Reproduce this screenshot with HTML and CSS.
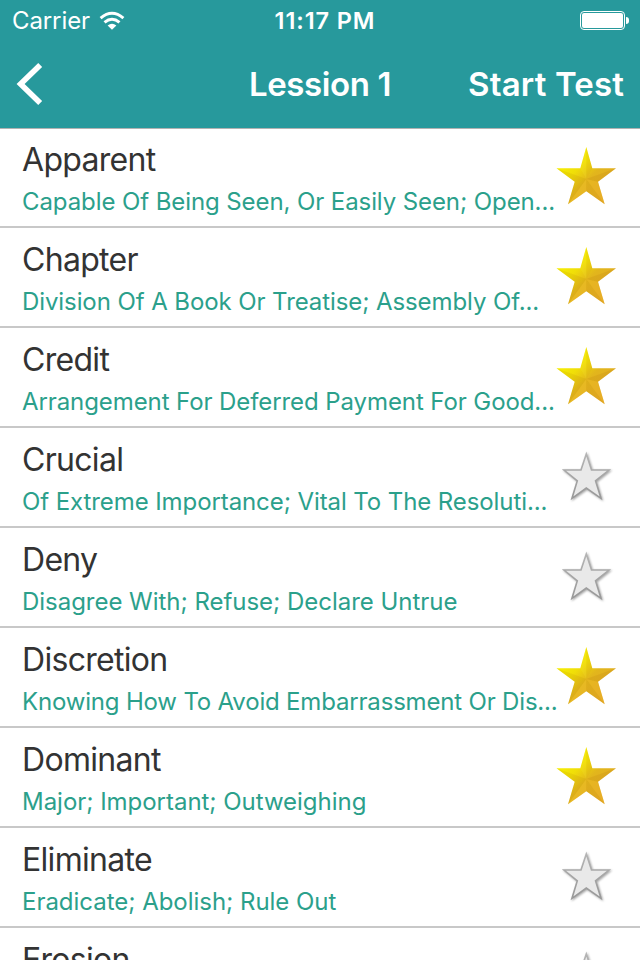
FILE: index.html
```html
<!DOCTYPE html>
<html lang="en">
<head>
    <meta charset="UTF-8">
    <meta name="viewport" content="width=device-width, initial-scale=1.0">
    <title>Lession 1</title>
    <link rel="stylesheet" href="styles.css">
</head>
<body>
    <svg class="symbols" aria-hidden="true">
        <defs>
            <linearGradient id="outline" x1="0" y1="0" x2="0" y2="1">
                <stop offset="0" stop-color="#b4b4b4"/>
                <stop offset="1" stop-color="#989898"/>
            </linearGradient>
            <linearGradient id="gold" x1="0.1" y1="0.15" x2="0.8" y2="0.85">
                <stop offset="0" stop-color="#faf600"/>
                <stop offset="0.35" stop-color="#f0de08"/>
                <stop offset="0.6" stop-color="#e2b61c"/>
                <stop offset="1" stop-color="#e3a926"/>
            </linearGradient>
        </defs>
        <symbol id="star-on" viewBox="0 0 60 60">
            <path fill="url(#gold)" d="M30.3.9 36.3 22.3 60 22.3 42 35.7 48.7 58.3 30.3 45.3 12 58.3 18.7 35.7.5 22.3 24.3 22.3Z"/>
            <path fill="#fff34a" opacity=".12" d="M30.3 33V.9L24.3 22.3Z"/>
            <path fill="#c99c10" opacity=".1" d="M30.3 33V.9L36.3 22.3Z"/>
            <path fill="#b88c00" opacity=".16" d="M30.3 33 .5 22.3 18.7 35.7Z"/>
            <path fill="#a87800" opacity=".1" d="M30.3 33 18.7 35.7 12 58.3Z"/>
            <path fill="#ffc93a" opacity=".2" d="M30.3 33 12 58.3 30.3 45.3Z"/>
            <path fill="#c98c10" opacity=".16" d="M30.3 33 30.3 45.3 48.7 58.3Z"/>
            <path fill="#f2b92c" opacity=".3" d="M30.3 33 42 35.7 48.7 58.3Z"/>
            <path fill="#c58a12" opacity=".25" d="M30.3 33 60 22.3 42 35.7Z"/>
        </symbol>
        <symbol id="star-off" viewBox="0 0 60 60">
            <path fill="#e9e9e9" stroke="url(#outline)" stroke-width="1.6" d="M30.3 8 35.5 24 53 24 39.5 34.8 45 52.3 30.3 42 16 52.3 21.3 34.8 8 24 25 24Z"/>
        </symbol>
    </svg>

    <div class="header">
        <div class="status-bar">
            <div class="signal">
                <span class="carrier">Carrier</span>
                <svg class="wifi" width="26" height="20" viewBox="0 0 26 20">
                    <path fill="none" stroke="#fff" stroke-width="3" d="M1.6 7.1Q13-2.6 24.4 7.1M5.5 11.4Q13 5.2 20.5 11.4"/>
                    <path fill="#fff" d="M8.6 14.4Q13 11 17.4 14.4L13 18.8Z"/>
                </svg>
            </div>
            <span class="time">11:17 PM</span>
            <div class="battery"><div class="level"></div></div>
        </div>
        <div class="nav-bar">
            <svg class="back" width="28" height="44" viewBox="0 0 28 44">
                <path fill="none" stroke="#fff" stroke-width="5.6" d="M24.2 3 4.6 22 24.2 41"/>
            </svg>
            <h1 class="title">Lession 1</h1>
            <span class="start">Start Test</span>
        </div>
    </div>

    <ul class="words">
        <li class="word">
            <div class="text"><h2>Apparent</h2><p>Capable Of Being Seen, Or Easily Seen; Open...</p></div>
            <svg class="star"><use href="#star-on"/></svg>
        </li>
        <li class="word">
            <div class="text"><h2>Chapter</h2><p>Division Of A Book Or Treatise; Assembly Of...</p></div>
            <svg class="star"><use href="#star-on"/></svg>
        </li>
        <li class="word">
            <div class="text"><h2>Credit</h2><p>Arrangement For Deferred Payment For Good...</p></div>
            <svg class="star"><use href="#star-on"/></svg>
        </li>
        <li class="word">
            <div class="text"><h2>Crucial</h2><p>Of Extreme Importance; Vital To The Resoluti...</p></div>
            <svg class="star off"><use href="#star-off"/></svg>
        </li>
        <li class="word">
            <div class="text"><h2>Deny</h2><p class="wide">Disagree With; Refuse; Declare Untrue</p></div>
            <svg class="star off"><use href="#star-off"/></svg>
        </li>
        <li class="word">
            <div class="text"><h2>Discretion</h2><p class="tight">Knowing How To Avoid Embarrassment Or Dis...</p></div>
            <svg class="star"><use href="#star-on"/></svg>
        </li>
        <li class="word">
            <div class="text"><h2>Dominant</h2><p class="wide">Major; Important; Outweighing</p></div>
            <svg class="star"><use href="#star-on"/></svg>
        </li>
        <li class="word">
            <div class="text"><h2>Eliminate</h2><p class="wide">Eradicate; Abolish; Rule Out</p></div>
            <svg class="star off"><use href="#star-off"/></svg>
        </li>
        <li class="word">
            <div class="text"><h2>Erosion</h2></div>
            <svg class="star off"><use href="#star-off"/></svg>
        </li>
    </ul>
</body>
</html>
```
FILE: styles.css
```css
* {
    box-sizing: border-box;
}

body {
    display: flex;
    flex-direction: column;
    margin: 0;
    height: 960px;
    overflow: hidden;
    background: #fff;
    font-family: Inter, "Liberation Sans", sans-serif;
}

.symbols {
    position: absolute;
    width: 0;
    height: 0;
}

.header {
    flex: none;
    height: 128px;
    background: #27999c;
    color: #fff;
}

.status-bar {
    display: grid;
    grid-template-columns: 1fr auto 1fr;
    align-items: center;
    height: 41px;
    padding: 0 11px 0 12px;
    font-size: 24px;
    line-height: 42px;
}

.signal {
    display: flex;
    align-items: center;
    gap: 9px;
}

.wifi {
    margin-bottom: 1px;
}

.carrier {
    letter-spacing: -0.1px;
}

.time {
    padding-left: 9px;
    font-weight: 600;
    font-size: 23.5px;
    letter-spacing: 0.9px;
}

.battery {
    position: relative;
    justify-self: end;
    width: 45px;
    height: 19px;
    margin: 0 4px 1px 0;
    padding: 1px;
    border: 1px solid #fff;
    border-radius: 4px;
}

.battery::after {
    content: "";
    position: absolute;
    top: 5px;
    right: -5px;
    width: 3px;
    height: 7px;
    border-radius: 0 3px 3px 0;
    background: #fff;
}

.level {
    height: 100%;
    border-radius: 2px;
    background: #fff;
}

.nav-bar {
    display: grid;
    grid-template-columns: 1fr auto 1fr;
    align-items: center;
    height: 86px;
    padding: 0 16px;
}

.title, .start {
    margin: 0;
    font-size: 33px;
    font-weight: 600;
    line-height: 86px;
}

.title {
    letter-spacing: -0.4px;
}

.start {
    justify-self: end;
    letter-spacing: 0.15px;
}

.words {
    flex: 1;
    min-height: 0;
    margin: 0;
    padding: 0;
    overflow: hidden;
    list-style: none;
    box-shadow: inset 0 1px #b2b2b2;
}

.word {
    display: flex;
    justify-content: space-between;
    height: 100px;
    padding-left: 22px;
    border-bottom: 2px solid #c8c8c8;
}

.text {
    min-width: 0;
    white-space: nowrap;
}

.word h2 {
    margin: 0;
    padding-top: 12px;
    font-size: 32px;
    font-weight: 400;
    line-height: 40px;
    letter-spacing: -0.7px;
    color: #333;
}

.word p {
    margin: 0;
    padding-top: 6px;
    font-size: 24px;
    line-height: 32px;
    letter-spacing: -0.09px;
    color: #2ba08b;
}

.word .wide {
    letter-spacing: -0.03px;
}

.word .tight {
    letter-spacing: -0.18px;
}

.star {
    flex: none;
    width: 60px;
    height: 60px;
    margin: 18px 24px 0 0;
}

.star.off {
    filter: drop-shadow(1px 1px 1px rgba(0, 0, 0, 0.35));
}
```
